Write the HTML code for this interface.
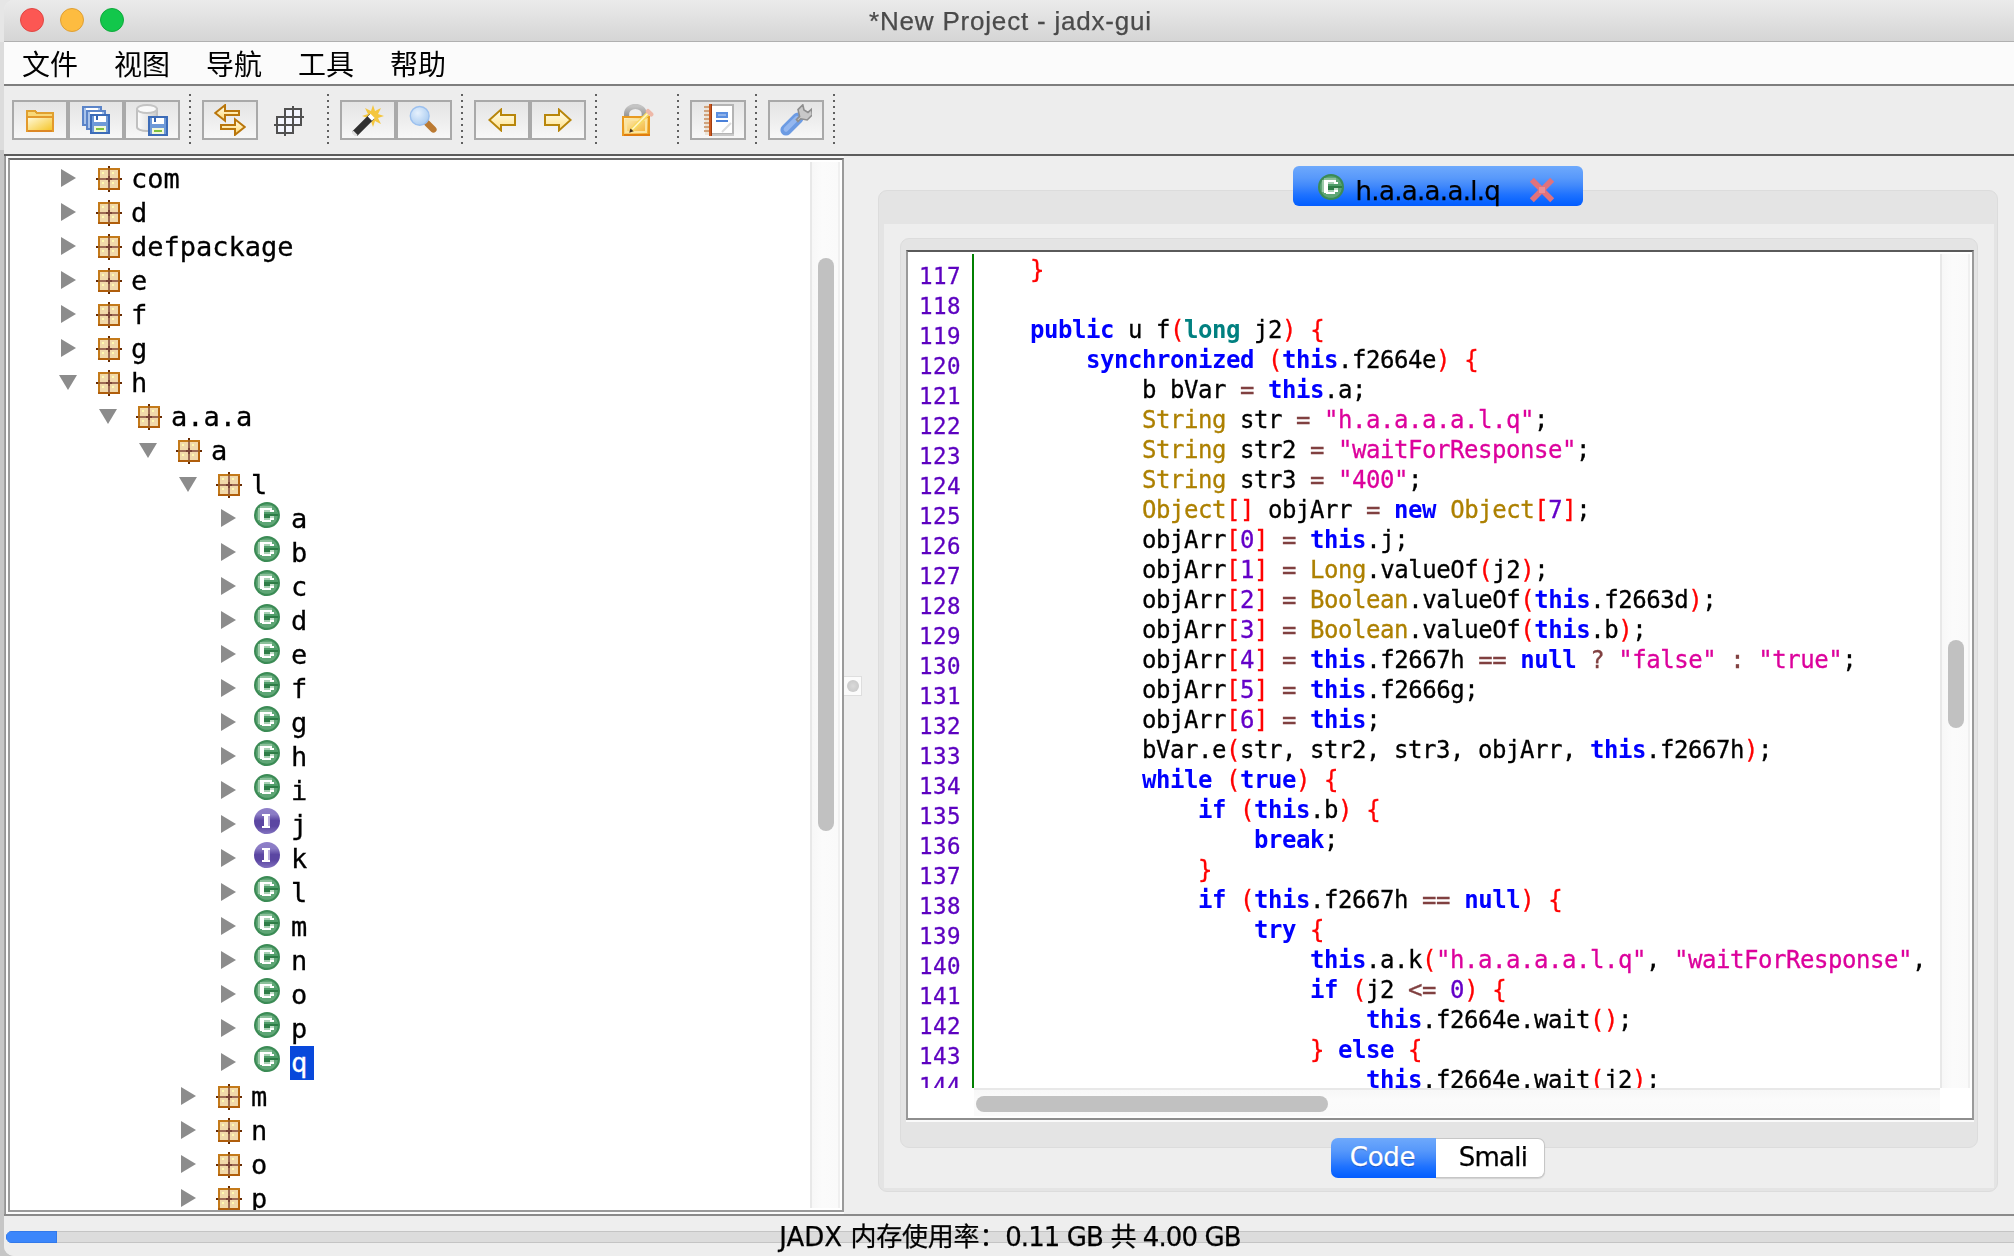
<!DOCTYPE html><html><head><meta charset="utf-8"><title>*New Project - jadx-gui</title><style>
*{box-sizing:border-box;margin:0;padding:0}
html,body{width:2014px;height:1256px;overflow:hidden;background:linear-gradient(#e6e6e6 0 42px,#dcdcdc 42px 150px,#c6c6c6 150px)}
body{position:relative;font-family:"DejaVu Sans","Liberation Sans","Noto Sans CJK SC",sans-serif;}
.abs{position:absolute}
#win{opacity:0.999;position:absolute;left:4px;top:0;width:2010px;height:1256px;background:#eeeeee;border-radius:10px 0 0 10px;overflow:hidden}
#title{position:absolute;left:0;top:0;width:2010px;height:42px;background:linear-gradient(#ebebeb,#d5d5d5);border-bottom:1px solid #b0b0b0}
#title .t{position:absolute;left:0;width:2010px;text-align:center;top:6px;padding-left:3px;font:26px/30px "Liberation Sans",sans-serif;color:#4a4a4a;letter-spacing:0.800px;-webkit-text-stroke:0.250px}
.tl{position:absolute;top:8px;width:24px;height:24px;border-radius:50%}
#menu{position:absolute;left:0;top:42px;width:2010px;height:42px;background:#fbfbfb}
#menu span{position:absolute;top:3px;font:28px/42px "Liberation Sans","Noto Sans CJK SC",sans-serif;color:#000}
#mline{position:absolute;left:0;top:84px;width:2010px;height:2px;background:#7e7e7e}
#tb{position:absolute;left:0;top:86px;width:2010px;height:68px;background:#ededed}
#tline{position:absolute;left:0;top:154px;width:2010px;height:2px;background:#5c5c5c}
.btn{position:absolute;top:14px;height:40px;width:56px;border:2px solid #a9a9a9;background:linear-gradient(#e4e4e4,#f7f7f7)}
.sep{position:absolute;top:8px;width:2px;height:50px;background:repeating-linear-gradient(#606060 0 2px,transparent 2px 6px)}
.ico{position:absolute;width:32px;height:32px}
#tree{position:absolute;left:4px;top:158px;width:836px;height:1054px;background:#fff;border:2px solid #9a9a9a;border-top-color:#6a6a6a;overflow:hidden}
.row{position:absolute;height:34px;font:27px/34px "DejaVu Sans Mono","Liberation Mono",monospace;color:#000;white-space:pre;-webkit-text-stroke:0.300px}
.row .lb{position:absolute;top:0;left:-1px;height:34px;width:24px;padding-left:1px}
.sel{background:#0848db;color:#fff}
.vtrack{position:absolute;background:linear-gradient(90deg,#f7f7f7,#fbfbfb 40%,#fafafa);border-left:2px solid #e8e8e8;border-right:2px solid #f0f0f0}
.thumb{position:absolute;background:#c1c1c1;border-radius:8px}
#code{position:absolute;left:902px;top:250px;width:1068px;height:870px;background:#fff;border:2px solid #9a9a9a;border-top-color:#5a5a5a;border-bottom-color:#8e8e8e;overflow:hidden}
.ln{position:absolute;left:0;width:2000px;height:30px;font:24px/30px "DejaVu Sans Mono","Liberation Mono",monospace;letter-spacing:-0.449px;white-space:pre;color:#000;-webkit-text-stroke:0.300px}
.no{position:absolute;font:22.500px/30px "DejaVu Sans Mono","Liberation Mono",monospace;letter-spacing:0.455px;color:#5c00c0;white-space:pre;-webkit-text-stroke:0.300px}
.k{color:#0000ff;font-weight:bold;-webkit-text-stroke:0}
.t{color:#008080;font-weight:bold;-webkit-text-stroke:0}
.f{color:#ad8000}
.s{color:#dc009c}
.n{color:#6400c8}
.p{color:#ff0000}
.o{color:#804040}
.ui{font-family:"DejaVu Sans","Liberation Sans","Noto Sans CJK SC",sans-serif;font-size:26px;white-space:pre;-webkit-text-stroke:0.250px}
</style></head><body>
<div id="win">
<div id="title"><div class="tl" style="left:16px;background:#fc5753;border:1px solid #df4744"></div><div class="tl" style="left:56px;background:#fdbc40;border:1px solid #de9f34"></div><div class="tl" style="left:96px;background:#12c74b;border:1px solid #10a93c"></div><div class="t">*New Project - jadx-gui</div></div>
<div id="menu">
<span style="left:18px">文件</span>
<span style="left:110px">视图</span>
<span style="left:202px">导航</span>
<span style="left:294px">工具</span>
<span style="left:386px">帮助</span>
</div><div id="mline"></div>
<div id="tb">
<div class="btn" style="left:8px"></div>
<div class="btn" style="left:64px"></div>
<div class="btn" style="left:120px"></div>
<div class="btn" style="left:198px"></div>
<div class="btn" style="left:336px"></div>
<div class="btn" style="left:392px"></div>
<div class="btn" style="left:470px"></div>
<div class="btn" style="left:526px"></div>
<div class="btn" style="left:686px"></div>
<div class="btn" style="left:764px"></div>
<div class="sep" style="left:185px"></div>
<div class="sep" style="left:323px"></div>
<div class="sep" style="left:457px"></div>
<div class="sep" style="left:591px"></div>
<div class="sep" style="left:673px"></div>
<div class="sep" style="left:751px"></div>
<div class="sep" style="left:829px"></div>
<svg class="ico" style="left:20px;top:18px" viewBox="0 0 16 16" shape-rendering="crispEdges"><defs><linearGradient id="gf" x1="0" y1="0" x2="1" y2="1"><stop offset="0" stop-color="#fffbe0"/><stop offset="1" stop-color="#f5c320"/></linearGradient></defs><path d="M1.500 3.500h4l1 1h8v2h-13z" fill="#f8d878" stroke="#e0a030"/><path d="M1.500 6.500h13v7h-13z" fill="url(#gf)" stroke="#e39a2c"/><path d="M2 13.500h12" stroke="#dd8826"/></svg>
<svg class="ico" style="left:78px;top:20px" viewBox="0 0 16 16" shape-rendering="crispEdges"><rect x="0.5" y="0.5" width="9" height="9" fill="#a9c3ea" stroke="#5b84c8"/><rect x="2" y="1" width="6" height="2" fill="#fff"/><rect x="2.5" y="2.5" width="9" height="9" fill="#a9c3ea" stroke="#5b84c8"/><rect x="4" y="3" width="6" height="2" fill="#fff"/><g transform="translate(4,4)"><rect x="0.5" y="0.5" width="9" height="9" fill="#6f9ad8" stroke="#3d6cb8"/><rect x="2" y="1" width="6" height="3" fill="#fff"/><rect x="3" y="1" width="1" height="2" fill="#3563b0"/><rect x="2" y="6" width="6" height="3" fill="#f2f8d8"/><rect x="3" y="7" width="4" height="1" fill="#7ec23c"/></g></svg>
<svg class="ico" style="left:132px;top:18px" viewBox="0 0 16 16"><defs><linearGradient id="gc" x1="0" x2="1"><stop offset="0" stop-color="#fdfdfd"/><stop offset="0.6" stop-color="#e2e2e2"/><stop offset="1" stop-color="#c9c9c9"/></linearGradient></defs><path d="M0.5 2.5v9c0 1.2 2.3 2 5 2s5-.8 5-2v-9z" fill="url(#gc)" stroke="#c0c0c0"/><ellipse cx="5.5" cy="2.5" rx="5" ry="2" fill="#fafafa" stroke="#c4c4c4"/><g shape-rendering="crispEdges"><g transform="translate(6,6)"><rect x="0.5" y="0.5" width="9" height="9" fill="#6f9ad8" stroke="#3d6cb8"/><rect x="2" y="1" width="6" height="3" fill="#fff"/><rect x="3" y="1" width="1" height="2" fill="#3563b0"/><rect x="2" y="6" width="6" height="3" fill="#f2f8d8"/><rect x="3" y="7" width="4" height="1" fill="#7ec23c"/></g></g></svg>
<svg class="ico" style="left:210px;top:18px" viewBox="0 0 16 16"><defs><linearGradient id="ga" x1="0" y1="0" x2="0" y2="1"><stop offset="0" stop-color="#fffdf0"/><stop offset="1" stop-color="#ffd76a"/></linearGradient></defs><path d="M0.6 4.5L5.5 0.6V3.5H12.5V5.5H5.5V8.4z" fill="url(#ga)" stroke="#b9760c" stroke-width="1"/><path d="M15.4 11.5L10.5 7.6V10.5H3.5V12.5H10.5V15.4z" fill="url(#ga)" stroke="#b9760c" stroke-width="1"/></svg>
<svg class="ico" style="left:270px;top:20px" viewBox="0 0 16 16" shape-rendering="crispEdges"><rect x="5" y="1" width="9" height="9" fill="#f3f6fe"/><rect x="1" y="5" width="9" height="9" fill="#f3f6fe"/><g fill="#505050"><rect x="5" y="1" width="1" height="9"/><rect x="9" y="0" width="1" height="10"/><rect x="13" y="1" width="1" height="9"/><rect x="5" y="1" width="9" height="1"/><rect x="5" y="5" width="10" height="1"/><rect x="5" y="9" width="9" height="1"/><rect x="1" y="5" width="1" height="9"/><rect x="5" y="5" width="1" height="10"/><rect x="9" y="5" width="1" height="9"/><rect x="1" y="5" width="9" height="1"/><rect x="0" y="9" width="10" height="1"/><rect x="1" y="13" width="9" height="1"/></g></svg>
<svg class="ico" style="left:348px;top:18px" viewBox="0 0 16 16"><g fill="#f5c22a"><path d="M10.5 0.5l1 3 3-1.5-1.5 3 3 1-3 1 1.5 3-3-1.5-1 3-1-3-3 1.5 1.5-3-3-1 3-1-1.500-3 3 1.5z" opacity="0.9"/></g><path d="M1.400 14.800L10 6.200" stroke="#303030" stroke-width="3.400" stroke-linecap="butt"/><path d="M8.900 7.300L10.300 5.900" stroke="#fff" stroke-width="3"/><path d="M0.800 15.400L1.800 14.400" stroke="#e0e0e0" stroke-width="3"/></svg>
<svg class="ico" style="left:404px;top:18px" viewBox="0 0 16 16"><defs><radialGradient id="gl" cx="0.4" cy="0.35" r="0.7"><stop offset="0" stop-color="#e6f1fd"/><stop offset="1" stop-color="#a9cbf0"/></radialGradient></defs><path d="M9.700 9.700L12.700 12.700" stroke="#bb7a32" stroke-width="3.200" stroke-linecap="round"/><circle cx="5.850" cy="5.950" r="4.700" fill="url(#gl)" stroke="#9cc0ee" stroke-width="0.700"/></svg>
<svg class="ico" style="left:484px;top:22px;width:28px;height:24px" viewBox="0 0 14 12"><defs><linearGradient id="gb" x1="0" y1="0" x2="0" y2="1"><stop offset="0" stop-color="#fffef2"/><stop offset="1" stop-color="#ffe28a"/></linearGradient></defs><path d="M0.7 6L6.5 0.8V3.5H13.5V8.5H6.5V11.2z" fill="url(#gb)" stroke="#b8860b" stroke-width="1"/></svg>
<svg class="ico" style="left:540px;top:22px;width:28px;height:24px" viewBox="0 0 14 12"><path d="M13.3 6L7.5 0.8V3.5H0.5V8.5H7.5V11.2z" fill="url(#gb)" stroke="#b8860b" stroke-width="1"/></svg>
<svg class="ico" style="left:618px;top:18px" viewBox="0 0 16 16"><defs><linearGradient id="gk" x1="0" y1="0" x2="1" y2="1"><stop offset="0" stop-color="#fff3c4"/><stop offset="0.500" stop-color="#f8d070"/><stop offset="1" stop-color="#f0a828"/></linearGradient><linearGradient id="gs" x1="0" y1="0" x2="0" y2="1"><stop offset="0" stop-color="#c4c4c4"/><stop offset="1" stop-color="#8c8c8c"/></linearGradient></defs><path d="M2.300 7V4.800a4.400 3.600 0 0 1 8.800 0V7" fill="none" stroke="url(#gs)" stroke-width="2.600"/><rect x="0.500" y="6.500" width="13" height="9" fill="url(#gk)" stroke="#e89a20"/><path d="M1 15.500h13" stroke="#e07c10" stroke-width="1"/><rect x="2" y="8" width="10" height="6" fill="none" stroke="#fbe4a0" stroke-width="1"/><path d="M4.800 13.200l8.600-8.800" stroke="#f6d860" stroke-width="2.200"/><path d="M5.200 12.600l8-8.200" stroke="#fff6c8" stroke-width="0.800"/><path d="M3.600 14.400l0.600-2.200 1.600 1.400z" fill="#4a3420"/><path d="M13 3.600l1.600 1.600" stroke="#eeb8a8" stroke-width="2.200" stroke-linecap="round"/></svg>
<svg class="ico" style="left:700px;top:18px" viewBox="0 0 16 16" shape-rendering="crispEdges"><rect x="3.500" y="0.500" width="11" height="14.500" fill="#fff" stroke="#b4b4b4"/><rect x="4" y="15" width="11" height="1" fill="#c9c9c9"/><rect x="0.500" y="0.500" width="2.500" height="15" fill="#ece3d6"/><g fill="#cfa27c"><rect x="0" y="1" width="2.500" height="1"/><rect x="0" y="3" width="2.500" height="1"/><rect x="0" y="5" width="2.500" height="1"/><rect x="0" y="7" width="2.500" height="1"/><rect x="0" y="9" width="2.500" height="1"/><rect x="0" y="11" width="2.500" height="1"/><rect x="0" y="13" width="2.500" height="1"/></g><rect x="2.400" y="0" width="1.600" height="16" fill="#cc5a20"/><rect x="3.400" y="0" width="0.600" height="16" fill="#a03c10"/><rect x="6" y="4" width="6" height="3" fill="#5b8fe0"/><rect x="7" y="5" width="4" height="1" fill="#8fb2ea"/><rect x="6" y="8" width="6" height="1" fill="#4a80d8"/><path d="M9 14l4.500-4.500" stroke="#dcdcdc" stroke-width="1" shape-rendering="auto"/></svg>
<svg class="ico" style="left:776px;top:18px" viewBox="0 0 16 16"><path d="M3 13L9 7" stroke="#6c9be3" stroke-width="5.600" stroke-linecap="round"/><path d="M3 12.600L8.400 7.200" stroke="#94b7ef" stroke-width="2.400" stroke-linecap="round"/><path d="M8.200 7.800l1.600-1.600-0.800-3.400 2.400-2.400 0.600 2.600 2 1.200 1.800-1.600 0.400 2.800-2.600 2.600-3.200-0.600-1.400 1.400z" fill="#c8c8c8" stroke="#8e8e8e" stroke-width="0.800"/></svg>
</div><div id="tline"></div>
<div class="abs" style="left:0;top:156px;width:2px;height:1058px;background:linear-gradient(90deg,#a6a6a6,#8c8c8c)"></div><div class="abs" style="left:2px;top:156px;width:2px;height:1058px;background:#fcfcfc"></div><div class="abs" style="left:2px;top:156px;width:838px;height:2px;background:#f9f9f9"></div><div class="abs" style="left:2px;top:1212px;width:838px;height:2px;background:#fbfbfb"></div>
<div id="tree">
<svg class="abs" style="left:51px;top:9px;width:15px;height:18px" viewBox="0 0 15 18"><path d="M0 0V18L15 9z" fill="#8c8c8c"/></svg>
<svg class="ico" style="left:84px;top:4px" viewBox="0 0 16 16" shape-rendering="crispEdges"><rect x="2" y="2" width="11" height="11" fill="#c47a1a"/><rect x="12" y="3" width="1" height="10" fill="#b4640f"/><rect x="2" y="12" width="11" height="1" fill="#b05e0c"/><rect x="3" y="3" width="9" height="9" fill="#f1d9ab"/><path d="M3 7.500h9M7.500 3v9" stroke="#9c6a55" fill="none"/><path d="M2 7.500h1M12 7.500h1M7.500 2v1M7.500 12v1" stroke="#a0621e"/><path d="M1 7.500h1M13 7.500h1M7.500 1v1M7.500 13v1" stroke="#6b2c00"/><path d="M6 7.500h3M7.500 6v3" stroke="#7a4438"/><g fill="#fffbb0"><rect x="4" y="4" width="1" height="1"/><rect x="9" y="4" width="1" height="1"/><rect x="4" y="9" width="1" height="1"/><rect x="9" y="9" width="1" height="1"/></g></svg>
<div class="row" style="left:121px;top:2px"><span class="lb">com</span></div>
<svg class="abs" style="left:51px;top:43px;width:15px;height:18px" viewBox="0 0 15 18"><path d="M0 0V18L15 9z" fill="#8c8c8c"/></svg>
<svg class="ico" style="left:84px;top:38px" viewBox="0 0 16 16" shape-rendering="crispEdges"><rect x="2" y="2" width="11" height="11" fill="#c47a1a"/><rect x="12" y="3" width="1" height="10" fill="#b4640f"/><rect x="2" y="12" width="11" height="1" fill="#b05e0c"/><rect x="3" y="3" width="9" height="9" fill="#f1d9ab"/><path d="M3 7.500h9M7.500 3v9" stroke="#9c6a55" fill="none"/><path d="M2 7.500h1M12 7.500h1M7.500 2v1M7.500 12v1" stroke="#a0621e"/><path d="M1 7.500h1M13 7.500h1M7.500 1v1M7.500 13v1" stroke="#6b2c00"/><path d="M6 7.500h3M7.500 6v3" stroke="#7a4438"/><g fill="#fffbb0"><rect x="4" y="4" width="1" height="1"/><rect x="9" y="4" width="1" height="1"/><rect x="4" y="9" width="1" height="1"/><rect x="9" y="9" width="1" height="1"/></g></svg>
<div class="row" style="left:121px;top:36px"><span class="lb">d</span></div>
<svg class="abs" style="left:51px;top:77px;width:15px;height:18px" viewBox="0 0 15 18"><path d="M0 0V18L15 9z" fill="#8c8c8c"/></svg>
<svg class="ico" style="left:84px;top:72px" viewBox="0 0 16 16" shape-rendering="crispEdges"><rect x="2" y="2" width="11" height="11" fill="#c47a1a"/><rect x="12" y="3" width="1" height="10" fill="#b4640f"/><rect x="2" y="12" width="11" height="1" fill="#b05e0c"/><rect x="3" y="3" width="9" height="9" fill="#f1d9ab"/><path d="M3 7.500h9M7.500 3v9" stroke="#9c6a55" fill="none"/><path d="M2 7.500h1M12 7.500h1M7.500 2v1M7.500 12v1" stroke="#a0621e"/><path d="M1 7.500h1M13 7.500h1M7.500 1v1M7.500 13v1" stroke="#6b2c00"/><path d="M6 7.500h3M7.500 6v3" stroke="#7a4438"/><g fill="#fffbb0"><rect x="4" y="4" width="1" height="1"/><rect x="9" y="4" width="1" height="1"/><rect x="4" y="9" width="1" height="1"/><rect x="9" y="9" width="1" height="1"/></g></svg>
<div class="row" style="left:121px;top:70px"><span class="lb">defpackage</span></div>
<svg class="abs" style="left:51px;top:111px;width:15px;height:18px" viewBox="0 0 15 18"><path d="M0 0V18L15 9z" fill="#8c8c8c"/></svg>
<svg class="ico" style="left:84px;top:106px" viewBox="0 0 16 16" shape-rendering="crispEdges"><rect x="2" y="2" width="11" height="11" fill="#c47a1a"/><rect x="12" y="3" width="1" height="10" fill="#b4640f"/><rect x="2" y="12" width="11" height="1" fill="#b05e0c"/><rect x="3" y="3" width="9" height="9" fill="#f1d9ab"/><path d="M3 7.500h9M7.500 3v9" stroke="#9c6a55" fill="none"/><path d="M2 7.500h1M12 7.500h1M7.500 2v1M7.500 12v1" stroke="#a0621e"/><path d="M1 7.500h1M13 7.500h1M7.500 1v1M7.500 13v1" stroke="#6b2c00"/><path d="M6 7.500h3M7.500 6v3" stroke="#7a4438"/><g fill="#fffbb0"><rect x="4" y="4" width="1" height="1"/><rect x="9" y="4" width="1" height="1"/><rect x="4" y="9" width="1" height="1"/><rect x="9" y="9" width="1" height="1"/></g></svg>
<div class="row" style="left:121px;top:104px"><span class="lb">e</span></div>
<svg class="abs" style="left:51px;top:145px;width:15px;height:18px" viewBox="0 0 15 18"><path d="M0 0V18L15 9z" fill="#8c8c8c"/></svg>
<svg class="ico" style="left:84px;top:140px" viewBox="0 0 16 16" shape-rendering="crispEdges"><rect x="2" y="2" width="11" height="11" fill="#c47a1a"/><rect x="12" y="3" width="1" height="10" fill="#b4640f"/><rect x="2" y="12" width="11" height="1" fill="#b05e0c"/><rect x="3" y="3" width="9" height="9" fill="#f1d9ab"/><path d="M3 7.500h9M7.500 3v9" stroke="#9c6a55" fill="none"/><path d="M2 7.500h1M12 7.500h1M7.500 2v1M7.500 12v1" stroke="#a0621e"/><path d="M1 7.500h1M13 7.500h1M7.500 1v1M7.500 13v1" stroke="#6b2c00"/><path d="M6 7.500h3M7.500 6v3" stroke="#7a4438"/><g fill="#fffbb0"><rect x="4" y="4" width="1" height="1"/><rect x="9" y="4" width="1" height="1"/><rect x="4" y="9" width="1" height="1"/><rect x="9" y="9" width="1" height="1"/></g></svg>
<div class="row" style="left:121px;top:138px"><span class="lb">f</span></div>
<svg class="abs" style="left:51px;top:179px;width:15px;height:18px" viewBox="0 0 15 18"><path d="M0 0V18L15 9z" fill="#8c8c8c"/></svg>
<svg class="ico" style="left:84px;top:174px" viewBox="0 0 16 16" shape-rendering="crispEdges"><rect x="2" y="2" width="11" height="11" fill="#c47a1a"/><rect x="12" y="3" width="1" height="10" fill="#b4640f"/><rect x="2" y="12" width="11" height="1" fill="#b05e0c"/><rect x="3" y="3" width="9" height="9" fill="#f1d9ab"/><path d="M3 7.500h9M7.500 3v9" stroke="#9c6a55" fill="none"/><path d="M2 7.500h1M12 7.500h1M7.500 2v1M7.500 12v1" stroke="#a0621e"/><path d="M1 7.500h1M13 7.500h1M7.500 1v1M7.500 13v1" stroke="#6b2c00"/><path d="M6 7.500h3M7.500 6v3" stroke="#7a4438"/><g fill="#fffbb0"><rect x="4" y="4" width="1" height="1"/><rect x="9" y="4" width="1" height="1"/><rect x="4" y="9" width="1" height="1"/><rect x="9" y="9" width="1" height="1"/></g></svg>
<div class="row" style="left:121px;top:172px"><span class="lb">g</span></div>
<svg class="abs" style="left:49px;top:215px;width:18px;height:15px" viewBox="0 0 18 15"><path d="M0 0H18L9 15z" fill="#8c8c8c"/></svg>
<svg class="ico" style="left:84px;top:208px" viewBox="0 0 16 16" shape-rendering="crispEdges"><rect x="2" y="2" width="11" height="11" fill="#c47a1a"/><rect x="12" y="3" width="1" height="10" fill="#b4640f"/><rect x="2" y="12" width="11" height="1" fill="#b05e0c"/><rect x="3" y="3" width="9" height="9" fill="#f1d9ab"/><path d="M3 7.500h9M7.500 3v9" stroke="#9c6a55" fill="none"/><path d="M2 7.500h1M12 7.500h1M7.500 2v1M7.500 12v1" stroke="#a0621e"/><path d="M1 7.500h1M13 7.500h1M7.500 1v1M7.500 13v1" stroke="#6b2c00"/><path d="M6 7.500h3M7.500 6v3" stroke="#7a4438"/><g fill="#fffbb0"><rect x="4" y="4" width="1" height="1"/><rect x="9" y="4" width="1" height="1"/><rect x="4" y="9" width="1" height="1"/><rect x="9" y="9" width="1" height="1"/></g></svg>
<div class="row" style="left:121px;top:206px"><span class="lb">h</span></div>
<svg class="abs" style="left:89px;top:249px;width:18px;height:15px" viewBox="0 0 18 15"><path d="M0 0H18L9 15z" fill="#8c8c8c"/></svg>
<svg class="ico" style="left:124px;top:242px" viewBox="0 0 16 16" shape-rendering="crispEdges"><rect x="2" y="2" width="11" height="11" fill="#c47a1a"/><rect x="12" y="3" width="1" height="10" fill="#b4640f"/><rect x="2" y="12" width="11" height="1" fill="#b05e0c"/><rect x="3" y="3" width="9" height="9" fill="#f1d9ab"/><path d="M3 7.500h9M7.500 3v9" stroke="#9c6a55" fill="none"/><path d="M2 7.500h1M12 7.500h1M7.500 2v1M7.500 12v1" stroke="#a0621e"/><path d="M1 7.500h1M13 7.500h1M7.500 1v1M7.500 13v1" stroke="#6b2c00"/><path d="M6 7.500h3M7.500 6v3" stroke="#7a4438"/><g fill="#fffbb0"><rect x="4" y="4" width="1" height="1"/><rect x="9" y="4" width="1" height="1"/><rect x="4" y="9" width="1" height="1"/><rect x="9" y="9" width="1" height="1"/></g></svg>
<div class="row" style="left:161px;top:240px"><span class="lb">a.a.a</span></div>
<svg class="abs" style="left:129px;top:283px;width:18px;height:15px" viewBox="0 0 18 15"><path d="M0 0H18L9 15z" fill="#8c8c8c"/></svg>
<svg class="ico" style="left:164px;top:276px" viewBox="0 0 16 16" shape-rendering="crispEdges"><rect x="2" y="2" width="11" height="11" fill="#c47a1a"/><rect x="12" y="3" width="1" height="10" fill="#b4640f"/><rect x="2" y="12" width="11" height="1" fill="#b05e0c"/><rect x="3" y="3" width="9" height="9" fill="#f1d9ab"/><path d="M3 7.500h9M7.500 3v9" stroke="#9c6a55" fill="none"/><path d="M2 7.500h1M12 7.500h1M7.500 2v1M7.500 12v1" stroke="#a0621e"/><path d="M1 7.500h1M13 7.500h1M7.500 1v1M7.500 13v1" stroke="#6b2c00"/><path d="M6 7.500h3M7.500 6v3" stroke="#7a4438"/><g fill="#fffbb0"><rect x="4" y="4" width="1" height="1"/><rect x="9" y="4" width="1" height="1"/><rect x="4" y="9" width="1" height="1"/><rect x="9" y="9" width="1" height="1"/></g></svg>
<div class="row" style="left:201px;top:274px"><span class="lb">a</span></div>
<svg class="abs" style="left:169px;top:317px;width:18px;height:15px" viewBox="0 0 18 15"><path d="M0 0H18L9 15z" fill="#8c8c8c"/></svg>
<svg class="ico" style="left:204px;top:310px" viewBox="0 0 16 16" shape-rendering="crispEdges"><rect x="2" y="2" width="11" height="11" fill="#c47a1a"/><rect x="12" y="3" width="1" height="10" fill="#b4640f"/><rect x="2" y="12" width="11" height="1" fill="#b05e0c"/><rect x="3" y="3" width="9" height="9" fill="#f1d9ab"/><path d="M3 7.500h9M7.500 3v9" stroke="#9c6a55" fill="none"/><path d="M2 7.500h1M12 7.500h1M7.500 2v1M7.500 12v1" stroke="#a0621e"/><path d="M1 7.500h1M13 7.500h1M7.500 1v1M7.500 13v1" stroke="#6b2c00"/><path d="M6 7.500h3M7.500 6v3" stroke="#7a4438"/><g fill="#fffbb0"><rect x="4" y="4" width="1" height="1"/><rect x="9" y="4" width="1" height="1"/><rect x="4" y="9" width="1" height="1"/><rect x="9" y="9" width="1" height="1"/></g></svg>
<div class="row" style="left:241px;top:308px"><span class="lb">l</span></div>
<svg class="abs" style="left:211px;top:349px;width:15px;height:18px" viewBox="0 0 15 18"><path d="M0 0V18L15 9z" fill="#8c8c8c"/></svg>
<svg class="ico" style="left:244px;top:342px" viewBox="0 0 16 16"><circle cx="6.500" cy="6.500" r="6.500" fill="#3b8b55"/><circle cx="6.500" cy="6.500" r="5.400" fill="#5fa676"/><g shape-rendering="crispEdges"><rect x="3" y="2" width="6" height="1" fill="#8cc09b"/><rect x="2" y="3" width="1" height="6" fill="#9ccaa8"/><rect x="5" y="4" width="3" height="5" fill="#a9d1b4"/><rect x="8" y="7" width="2" height="1" fill="#c4dfcb"/><rect x="5" y="5" width="7" height="1" fill="#4f9d69"/><rect x="5" y="6" width="7" height="1" fill="#2e7d47"/><rect x="5" y="7" width="3" height="1" fill="#2e7d47"/><g fill="#fff"><rect x="3" y="3" width="6" height="1"/><rect x="8" y="4" width="2" height="1"/><rect x="3" y="3" width="2" height="6.500"/><rect x="4" y="9" width="4.500" height="1"/><rect x="8" y="8" width="2" height="1"/></g></g></svg>
<div class="row" style="left:281px;top:342px"><span class="lb">a</span></div>
<svg class="abs" style="left:211px;top:383px;width:15px;height:18px" viewBox="0 0 15 18"><path d="M0 0V18L15 9z" fill="#8c8c8c"/></svg>
<svg class="ico" style="left:244px;top:376px" viewBox="0 0 16 16"><circle cx="6.500" cy="6.500" r="6.500" fill="#3b8b55"/><circle cx="6.500" cy="6.500" r="5.400" fill="#5fa676"/><g shape-rendering="crispEdges"><rect x="3" y="2" width="6" height="1" fill="#8cc09b"/><rect x="2" y="3" width="1" height="6" fill="#9ccaa8"/><rect x="5" y="4" width="3" height="5" fill="#a9d1b4"/><rect x="8" y="7" width="2" height="1" fill="#c4dfcb"/><rect x="5" y="5" width="7" height="1" fill="#4f9d69"/><rect x="5" y="6" width="7" height="1" fill="#2e7d47"/><rect x="5" y="7" width="3" height="1" fill="#2e7d47"/><g fill="#fff"><rect x="3" y="3" width="6" height="1"/><rect x="8" y="4" width="2" height="1"/><rect x="3" y="3" width="2" height="6.500"/><rect x="4" y="9" width="4.500" height="1"/><rect x="8" y="8" width="2" height="1"/></g></g></svg>
<div class="row" style="left:281px;top:376px"><span class="lb">b</span></div>
<svg class="abs" style="left:211px;top:417px;width:15px;height:18px" viewBox="0 0 15 18"><path d="M0 0V18L15 9z" fill="#8c8c8c"/></svg>
<svg class="ico" style="left:244px;top:410px" viewBox="0 0 16 16"><circle cx="6.500" cy="6.500" r="6.500" fill="#3b8b55"/><circle cx="6.500" cy="6.500" r="5.400" fill="#5fa676"/><g shape-rendering="crispEdges"><rect x="3" y="2" width="6" height="1" fill="#8cc09b"/><rect x="2" y="3" width="1" height="6" fill="#9ccaa8"/><rect x="5" y="4" width="3" height="5" fill="#a9d1b4"/><rect x="8" y="7" width="2" height="1" fill="#c4dfcb"/><rect x="5" y="5" width="7" height="1" fill="#4f9d69"/><rect x="5" y="6" width="7" height="1" fill="#2e7d47"/><rect x="5" y="7" width="3" height="1" fill="#2e7d47"/><g fill="#fff"><rect x="3" y="3" width="6" height="1"/><rect x="8" y="4" width="2" height="1"/><rect x="3" y="3" width="2" height="6.500"/><rect x="4" y="9" width="4.500" height="1"/><rect x="8" y="8" width="2" height="1"/></g></g></svg>
<div class="row" style="left:281px;top:410px"><span class="lb">c</span></div>
<svg class="abs" style="left:211px;top:451px;width:15px;height:18px" viewBox="0 0 15 18"><path d="M0 0V18L15 9z" fill="#8c8c8c"/></svg>
<svg class="ico" style="left:244px;top:444px" viewBox="0 0 16 16"><circle cx="6.500" cy="6.500" r="6.500" fill="#3b8b55"/><circle cx="6.500" cy="6.500" r="5.400" fill="#5fa676"/><g shape-rendering="crispEdges"><rect x="3" y="2" width="6" height="1" fill="#8cc09b"/><rect x="2" y="3" width="1" height="6" fill="#9ccaa8"/><rect x="5" y="4" width="3" height="5" fill="#a9d1b4"/><rect x="8" y="7" width="2" height="1" fill="#c4dfcb"/><rect x="5" y="5" width="7" height="1" fill="#4f9d69"/><rect x="5" y="6" width="7" height="1" fill="#2e7d47"/><rect x="5" y="7" width="3" height="1" fill="#2e7d47"/><g fill="#fff"><rect x="3" y="3" width="6" height="1"/><rect x="8" y="4" width="2" height="1"/><rect x="3" y="3" width="2" height="6.500"/><rect x="4" y="9" width="4.500" height="1"/><rect x="8" y="8" width="2" height="1"/></g></g></svg>
<div class="row" style="left:281px;top:444px"><span class="lb">d</span></div>
<svg class="abs" style="left:211px;top:485px;width:15px;height:18px" viewBox="0 0 15 18"><path d="M0 0V18L15 9z" fill="#8c8c8c"/></svg>
<svg class="ico" style="left:244px;top:478px" viewBox="0 0 16 16"><circle cx="6.500" cy="6.500" r="6.500" fill="#3b8b55"/><circle cx="6.500" cy="6.500" r="5.400" fill="#5fa676"/><g shape-rendering="crispEdges"><rect x="3" y="2" width="6" height="1" fill="#8cc09b"/><rect x="2" y="3" width="1" height="6" fill="#9ccaa8"/><rect x="5" y="4" width="3" height="5" fill="#a9d1b4"/><rect x="8" y="7" width="2" height="1" fill="#c4dfcb"/><rect x="5" y="5" width="7" height="1" fill="#4f9d69"/><rect x="5" y="6" width="7" height="1" fill="#2e7d47"/><rect x="5" y="7" width="3" height="1" fill="#2e7d47"/><g fill="#fff"><rect x="3" y="3" width="6" height="1"/><rect x="8" y="4" width="2" height="1"/><rect x="3" y="3" width="2" height="6.500"/><rect x="4" y="9" width="4.500" height="1"/><rect x="8" y="8" width="2" height="1"/></g></g></svg>
<div class="row" style="left:281px;top:478px"><span class="lb">e</span></div>
<svg class="abs" style="left:211px;top:519px;width:15px;height:18px" viewBox="0 0 15 18"><path d="M0 0V18L15 9z" fill="#8c8c8c"/></svg>
<svg class="ico" style="left:244px;top:512px" viewBox="0 0 16 16"><circle cx="6.500" cy="6.500" r="6.500" fill="#3b8b55"/><circle cx="6.500" cy="6.500" r="5.400" fill="#5fa676"/><g shape-rendering="crispEdges"><rect x="3" y="2" width="6" height="1" fill="#8cc09b"/><rect x="2" y="3" width="1" height="6" fill="#9ccaa8"/><rect x="5" y="4" width="3" height="5" fill="#a9d1b4"/><rect x="8" y="7" width="2" height="1" fill="#c4dfcb"/><rect x="5" y="5" width="7" height="1" fill="#4f9d69"/><rect x="5" y="6" width="7" height="1" fill="#2e7d47"/><rect x="5" y="7" width="3" height="1" fill="#2e7d47"/><g fill="#fff"><rect x="3" y="3" width="6" height="1"/><rect x="8" y="4" width="2" height="1"/><rect x="3" y="3" width="2" height="6.500"/><rect x="4" y="9" width="4.500" height="1"/><rect x="8" y="8" width="2" height="1"/></g></g></svg>
<div class="row" style="left:281px;top:512px"><span class="lb">f</span></div>
<svg class="abs" style="left:211px;top:553px;width:15px;height:18px" viewBox="0 0 15 18"><path d="M0 0V18L15 9z" fill="#8c8c8c"/></svg>
<svg class="ico" style="left:244px;top:546px" viewBox="0 0 16 16"><circle cx="6.500" cy="6.500" r="6.500" fill="#3b8b55"/><circle cx="6.500" cy="6.500" r="5.400" fill="#5fa676"/><g shape-rendering="crispEdges"><rect x="3" y="2" width="6" height="1" fill="#8cc09b"/><rect x="2" y="3" width="1" height="6" fill="#9ccaa8"/><rect x="5" y="4" width="3" height="5" fill="#a9d1b4"/><rect x="8" y="7" width="2" height="1" fill="#c4dfcb"/><rect x="5" y="5" width="7" height="1" fill="#4f9d69"/><rect x="5" y="6" width="7" height="1" fill="#2e7d47"/><rect x="5" y="7" width="3" height="1" fill="#2e7d47"/><g fill="#fff"><rect x="3" y="3" width="6" height="1"/><rect x="8" y="4" width="2" height="1"/><rect x="3" y="3" width="2" height="6.500"/><rect x="4" y="9" width="4.500" height="1"/><rect x="8" y="8" width="2" height="1"/></g></g></svg>
<div class="row" style="left:281px;top:546px"><span class="lb">g</span></div>
<svg class="abs" style="left:211px;top:587px;width:15px;height:18px" viewBox="0 0 15 18"><path d="M0 0V18L15 9z" fill="#8c8c8c"/></svg>
<svg class="ico" style="left:244px;top:580px" viewBox="0 0 16 16"><circle cx="6.500" cy="6.500" r="6.500" fill="#3b8b55"/><circle cx="6.500" cy="6.500" r="5.400" fill="#5fa676"/><g shape-rendering="crispEdges"><rect x="3" y="2" width="6" height="1" fill="#8cc09b"/><rect x="2" y="3" width="1" height="6" fill="#9ccaa8"/><rect x="5" y="4" width="3" height="5" fill="#a9d1b4"/><rect x="8" y="7" width="2" height="1" fill="#c4dfcb"/><rect x="5" y="5" width="7" height="1" fill="#4f9d69"/><rect x="5" y="6" width="7" height="1" fill="#2e7d47"/><rect x="5" y="7" width="3" height="1" fill="#2e7d47"/><g fill="#fff"><rect x="3" y="3" width="6" height="1"/><rect x="8" y="4" width="2" height="1"/><rect x="3" y="3" width="2" height="6.500"/><rect x="4" y="9" width="4.500" height="1"/><rect x="8" y="8" width="2" height="1"/></g></g></svg>
<div class="row" style="left:281px;top:580px"><span class="lb">h</span></div>
<svg class="abs" style="left:211px;top:621px;width:15px;height:18px" viewBox="0 0 15 18"><path d="M0 0V18L15 9z" fill="#8c8c8c"/></svg>
<svg class="ico" style="left:244px;top:614px" viewBox="0 0 16 16"><circle cx="6.500" cy="6.500" r="6.500" fill="#3b8b55"/><circle cx="6.500" cy="6.500" r="5.400" fill="#5fa676"/><g shape-rendering="crispEdges"><rect x="3" y="2" width="6" height="1" fill="#8cc09b"/><rect x="2" y="3" width="1" height="6" fill="#9ccaa8"/><rect x="5" y="4" width="3" height="5" fill="#a9d1b4"/><rect x="8" y="7" width="2" height="1" fill="#c4dfcb"/><rect x="5" y="5" width="7" height="1" fill="#4f9d69"/><rect x="5" y="6" width="7" height="1" fill="#2e7d47"/><rect x="5" y="7" width="3" height="1" fill="#2e7d47"/><g fill="#fff"><rect x="3" y="3" width="6" height="1"/><rect x="8" y="4" width="2" height="1"/><rect x="3" y="3" width="2" height="6.500"/><rect x="4" y="9" width="4.500" height="1"/><rect x="8" y="8" width="2" height="1"/></g></g></svg>
<div class="row" style="left:281px;top:614px"><span class="lb">i</span></div>
<svg class="abs" style="left:211px;top:655px;width:15px;height:18px" viewBox="0 0 15 18"><path d="M0 0V18L15 9z" fill="#8c8c8c"/></svg>
<svg class="ico" style="left:244px;top:648px" viewBox="0 0 16 16"><defs><linearGradient id="gi" x1="0" y1="0" x2="0" y2="1"><stop offset="0" stop-color="#8f80c9"/><stop offset="0.250" stop-color="#8a7bc4"/><stop offset="0.480" stop-color="#5b46a2"/><stop offset="0.700" stop-color="#5b46a2"/><stop offset="1" stop-color="#8373c0"/></linearGradient></defs><circle cx="6.500" cy="6.500" r="6.500" fill="url(#gi)"/><g shape-rendering="crispEdges"><rect x="4" y="3" width="4" height="1" fill="#fff"/><rect x="4" y="9" width="4" height="1" fill="#fff"/><rect x="5" y="3" width="2" height="7" fill="#fff"/><rect x="7" y="4" width="1" height="5" fill="#b9aedd"/></g></svg>
<div class="row" style="left:281px;top:648px"><span class="lb">j</span></div>
<svg class="abs" style="left:211px;top:689px;width:15px;height:18px" viewBox="0 0 15 18"><path d="M0 0V18L15 9z" fill="#8c8c8c"/></svg>
<svg class="ico" style="left:244px;top:682px" viewBox="0 0 16 16"><defs><linearGradient id="gi" x1="0" y1="0" x2="0" y2="1"><stop offset="0" stop-color="#8f80c9"/><stop offset="0.250" stop-color="#8a7bc4"/><stop offset="0.480" stop-color="#5b46a2"/><stop offset="0.700" stop-color="#5b46a2"/><stop offset="1" stop-color="#8373c0"/></linearGradient></defs><circle cx="6.500" cy="6.500" r="6.500" fill="url(#gi)"/><g shape-rendering="crispEdges"><rect x="4" y="3" width="4" height="1" fill="#fff"/><rect x="4" y="9" width="4" height="1" fill="#fff"/><rect x="5" y="3" width="2" height="7" fill="#fff"/><rect x="7" y="4" width="1" height="5" fill="#b9aedd"/></g></svg>
<div class="row" style="left:281px;top:682px"><span class="lb">k</span></div>
<svg class="abs" style="left:211px;top:723px;width:15px;height:18px" viewBox="0 0 15 18"><path d="M0 0V18L15 9z" fill="#8c8c8c"/></svg>
<svg class="ico" style="left:244px;top:716px" viewBox="0 0 16 16"><circle cx="6.500" cy="6.500" r="6.500" fill="#3b8b55"/><circle cx="6.500" cy="6.500" r="5.400" fill="#5fa676"/><g shape-rendering="crispEdges"><rect x="3" y="2" width="6" height="1" fill="#8cc09b"/><rect x="2" y="3" width="1" height="6" fill="#9ccaa8"/><rect x="5" y="4" width="3" height="5" fill="#a9d1b4"/><rect x="8" y="7" width="2" height="1" fill="#c4dfcb"/><rect x="5" y="5" width="7" height="1" fill="#4f9d69"/><rect x="5" y="6" width="7" height="1" fill="#2e7d47"/><rect x="5" y="7" width="3" height="1" fill="#2e7d47"/><g fill="#fff"><rect x="3" y="3" width="6" height="1"/><rect x="8" y="4" width="2" height="1"/><rect x="3" y="3" width="2" height="6.500"/><rect x="4" y="9" width="4.500" height="1"/><rect x="8" y="8" width="2" height="1"/></g></g></svg>
<div class="row" style="left:281px;top:716px"><span class="lb">l</span></div>
<svg class="abs" style="left:211px;top:757px;width:15px;height:18px" viewBox="0 0 15 18"><path d="M0 0V18L15 9z" fill="#8c8c8c"/></svg>
<svg class="ico" style="left:244px;top:750px" viewBox="0 0 16 16"><circle cx="6.500" cy="6.500" r="6.500" fill="#3b8b55"/><circle cx="6.500" cy="6.500" r="5.400" fill="#5fa676"/><g shape-rendering="crispEdges"><rect x="3" y="2" width="6" height="1" fill="#8cc09b"/><rect x="2" y="3" width="1" height="6" fill="#9ccaa8"/><rect x="5" y="4" width="3" height="5" fill="#a9d1b4"/><rect x="8" y="7" width="2" height="1" fill="#c4dfcb"/><rect x="5" y="5" width="7" height="1" fill="#4f9d69"/><rect x="5" y="6" width="7" height="1" fill="#2e7d47"/><rect x="5" y="7" width="3" height="1" fill="#2e7d47"/><g fill="#fff"><rect x="3" y="3" width="6" height="1"/><rect x="8" y="4" width="2" height="1"/><rect x="3" y="3" width="2" height="6.500"/><rect x="4" y="9" width="4.500" height="1"/><rect x="8" y="8" width="2" height="1"/></g></g></svg>
<div class="row" style="left:281px;top:750px"><span class="lb">m</span></div>
<svg class="abs" style="left:211px;top:791px;width:15px;height:18px" viewBox="0 0 15 18"><path d="M0 0V18L15 9z" fill="#8c8c8c"/></svg>
<svg class="ico" style="left:244px;top:784px" viewBox="0 0 16 16"><circle cx="6.500" cy="6.500" r="6.500" fill="#3b8b55"/><circle cx="6.500" cy="6.500" r="5.400" fill="#5fa676"/><g shape-rendering="crispEdges"><rect x="3" y="2" width="6" height="1" fill="#8cc09b"/><rect x="2" y="3" width="1" height="6" fill="#9ccaa8"/><rect x="5" y="4" width="3" height="5" fill="#a9d1b4"/><rect x="8" y="7" width="2" height="1" fill="#c4dfcb"/><rect x="5" y="5" width="7" height="1" fill="#4f9d69"/><rect x="5" y="6" width="7" height="1" fill="#2e7d47"/><rect x="5" y="7" width="3" height="1" fill="#2e7d47"/><g fill="#fff"><rect x="3" y="3" width="6" height="1"/><rect x="8" y="4" width="2" height="1"/><rect x="3" y="3" width="2" height="6.500"/><rect x="4" y="9" width="4.500" height="1"/><rect x="8" y="8" width="2" height="1"/></g></g></svg>
<div class="row" style="left:281px;top:784px"><span class="lb">n</span></div>
<svg class="abs" style="left:211px;top:825px;width:15px;height:18px" viewBox="0 0 15 18"><path d="M0 0V18L15 9z" fill="#8c8c8c"/></svg>
<svg class="ico" style="left:244px;top:818px" viewBox="0 0 16 16"><circle cx="6.500" cy="6.500" r="6.500" fill="#3b8b55"/><circle cx="6.500" cy="6.500" r="5.400" fill="#5fa676"/><g shape-rendering="crispEdges"><rect x="3" y="2" width="6" height="1" fill="#8cc09b"/><rect x="2" y="3" width="1" height="6" fill="#9ccaa8"/><rect x="5" y="4" width="3" height="5" fill="#a9d1b4"/><rect x="8" y="7" width="2" height="1" fill="#c4dfcb"/><rect x="5" y="5" width="7" height="1" fill="#4f9d69"/><rect x="5" y="6" width="7" height="1" fill="#2e7d47"/><rect x="5" y="7" width="3" height="1" fill="#2e7d47"/><g fill="#fff"><rect x="3" y="3" width="6" height="1"/><rect x="8" y="4" width="2" height="1"/><rect x="3" y="3" width="2" height="6.500"/><rect x="4" y="9" width="4.500" height="1"/><rect x="8" y="8" width="2" height="1"/></g></g></svg>
<div class="row" style="left:281px;top:818px"><span class="lb">o</span></div>
<svg class="abs" style="left:211px;top:859px;width:15px;height:18px" viewBox="0 0 15 18"><path d="M0 0V18L15 9z" fill="#8c8c8c"/></svg>
<svg class="ico" style="left:244px;top:852px" viewBox="0 0 16 16"><circle cx="6.500" cy="6.500" r="6.500" fill="#3b8b55"/><circle cx="6.500" cy="6.500" r="5.400" fill="#5fa676"/><g shape-rendering="crispEdges"><rect x="3" y="2" width="6" height="1" fill="#8cc09b"/><rect x="2" y="3" width="1" height="6" fill="#9ccaa8"/><rect x="5" y="4" width="3" height="5" fill="#a9d1b4"/><rect x="8" y="7" width="2" height="1" fill="#c4dfcb"/><rect x="5" y="5" width="7" height="1" fill="#4f9d69"/><rect x="5" y="6" width="7" height="1" fill="#2e7d47"/><rect x="5" y="7" width="3" height="1" fill="#2e7d47"/><g fill="#fff"><rect x="3" y="3" width="6" height="1"/><rect x="8" y="4" width="2" height="1"/><rect x="3" y="3" width="2" height="6.500"/><rect x="4" y="9" width="4.500" height="1"/><rect x="8" y="8" width="2" height="1"/></g></g></svg>
<div class="row" style="left:281px;top:852px"><span class="lb">p</span></div>
<svg class="abs" style="left:211px;top:893px;width:15px;height:18px" viewBox="0 0 15 18"><path d="M0 0V18L15 9z" fill="#8c8c8c"/></svg>
<svg class="ico" style="left:244px;top:886px" viewBox="0 0 16 16"><circle cx="6.500" cy="6.500" r="6.500" fill="#3b8b55"/><circle cx="6.500" cy="6.500" r="5.400" fill="#5fa676"/><g shape-rendering="crispEdges"><rect x="3" y="2" width="6" height="1" fill="#8cc09b"/><rect x="2" y="3" width="1" height="6" fill="#9ccaa8"/><rect x="5" y="4" width="3" height="5" fill="#a9d1b4"/><rect x="8" y="7" width="2" height="1" fill="#c4dfcb"/><rect x="5" y="5" width="7" height="1" fill="#4f9d69"/><rect x="5" y="6" width="7" height="1" fill="#2e7d47"/><rect x="5" y="7" width="3" height="1" fill="#2e7d47"/><g fill="#fff"><rect x="3" y="3" width="6" height="1"/><rect x="8" y="4" width="2" height="1"/><rect x="3" y="3" width="2" height="6.500"/><rect x="4" y="9" width="4.500" height="1"/><rect x="8" y="8" width="2" height="1"/></g></g></svg>
<div class="row" style="left:281px;top:886px"><span class="lb sel">q</span></div>
<svg class="abs" style="left:171px;top:927px;width:15px;height:18px" viewBox="0 0 15 18"><path d="M0 0V18L15 9z" fill="#8c8c8c"/></svg>
<svg class="ico" style="left:204px;top:922px" viewBox="0 0 16 16" shape-rendering="crispEdges"><rect x="2" y="2" width="11" height="11" fill="#c47a1a"/><rect x="12" y="3" width="1" height="10" fill="#b4640f"/><rect x="2" y="12" width="11" height="1" fill="#b05e0c"/><rect x="3" y="3" width="9" height="9" fill="#f1d9ab"/><path d="M3 7.500h9M7.500 3v9" stroke="#9c6a55" fill="none"/><path d="M2 7.500h1M12 7.500h1M7.500 2v1M7.500 12v1" stroke="#a0621e"/><path d="M1 7.500h1M13 7.500h1M7.500 1v1M7.500 13v1" stroke="#6b2c00"/><path d="M6 7.500h3M7.500 6v3" stroke="#7a4438"/><g fill="#fffbb0"><rect x="4" y="4" width="1" height="1"/><rect x="9" y="4" width="1" height="1"/><rect x="4" y="9" width="1" height="1"/><rect x="9" y="9" width="1" height="1"/></g></svg>
<div class="row" style="left:241px;top:920px"><span class="lb">m</span></div>
<svg class="abs" style="left:171px;top:961px;width:15px;height:18px" viewBox="0 0 15 18"><path d="M0 0V18L15 9z" fill="#8c8c8c"/></svg>
<svg class="ico" style="left:204px;top:956px" viewBox="0 0 16 16" shape-rendering="crispEdges"><rect x="2" y="2" width="11" height="11" fill="#c47a1a"/><rect x="12" y="3" width="1" height="10" fill="#b4640f"/><rect x="2" y="12" width="11" height="1" fill="#b05e0c"/><rect x="3" y="3" width="9" height="9" fill="#f1d9ab"/><path d="M3 7.500h9M7.500 3v9" stroke="#9c6a55" fill="none"/><path d="M2 7.500h1M12 7.500h1M7.500 2v1M7.500 12v1" stroke="#a0621e"/><path d="M1 7.500h1M13 7.500h1M7.500 1v1M7.500 13v1" stroke="#6b2c00"/><path d="M6 7.500h3M7.500 6v3" stroke="#7a4438"/><g fill="#fffbb0"><rect x="4" y="4" width="1" height="1"/><rect x="9" y="4" width="1" height="1"/><rect x="4" y="9" width="1" height="1"/><rect x="9" y="9" width="1" height="1"/></g></svg>
<div class="row" style="left:241px;top:954px"><span class="lb">n</span></div>
<svg class="abs" style="left:171px;top:995px;width:15px;height:18px" viewBox="0 0 15 18"><path d="M0 0V18L15 9z" fill="#8c8c8c"/></svg>
<svg class="ico" style="left:204px;top:990px" viewBox="0 0 16 16" shape-rendering="crispEdges"><rect x="2" y="2" width="11" height="11" fill="#c47a1a"/><rect x="12" y="3" width="1" height="10" fill="#b4640f"/><rect x="2" y="12" width="11" height="1" fill="#b05e0c"/><rect x="3" y="3" width="9" height="9" fill="#f1d9ab"/><path d="M3 7.500h9M7.500 3v9" stroke="#9c6a55" fill="none"/><path d="M2 7.500h1M12 7.500h1M7.500 2v1M7.500 12v1" stroke="#a0621e"/><path d="M1 7.500h1M13 7.500h1M7.500 1v1M7.500 13v1" stroke="#6b2c00"/><path d="M6 7.500h3M7.500 6v3" stroke="#7a4438"/><g fill="#fffbb0"><rect x="4" y="4" width="1" height="1"/><rect x="9" y="4" width="1" height="1"/><rect x="4" y="9" width="1" height="1"/><rect x="9" y="9" width="1" height="1"/></g></svg>
<div class="row" style="left:241px;top:988px"><span class="lb">o</span></div>
<svg class="abs" style="left:171px;top:1029px;width:15px;height:18px" viewBox="0 0 15 18"><path d="M0 0V18L15 9z" fill="#8c8c8c"/></svg>
<svg class="ico" style="left:204px;top:1024px" viewBox="0 0 16 16" shape-rendering="crispEdges"><rect x="2" y="2" width="11" height="11" fill="#c47a1a"/><rect x="12" y="3" width="1" height="10" fill="#b4640f"/><rect x="2" y="12" width="11" height="1" fill="#b05e0c"/><rect x="3" y="3" width="9" height="9" fill="#f1d9ab"/><path d="M3 7.500h9M7.500 3v9" stroke="#9c6a55" fill="none"/><path d="M2 7.500h1M12 7.500h1M7.500 2v1M7.500 12v1" stroke="#a0621e"/><path d="M1 7.500h1M13 7.500h1M7.500 1v1M7.500 13v1" stroke="#6b2c00"/><path d="M6 7.500h3M7.500 6v3" stroke="#7a4438"/><g fill="#fffbb0"><rect x="4" y="4" width="1" height="1"/><rect x="9" y="4" width="1" height="1"/><rect x="4" y="9" width="1" height="1"/><rect x="9" y="9" width="1" height="1"/></g></svg>
<div class="row" style="left:241px;top:1022px"><span class="lb">p</span></div>
<div class="vtrack" style="left:800px;top:2px;width:30px;height:1046px"></div>
<div class="thumb" style="left:808px;top:98px;width:16px;height:573px"></div>
</div>
<div class="abs" style="left:840px;top:676px;width:18px;height:20px;background:#fbfbfb;border:1px solid #dedede;border-left:none"><div class="abs" style="left:3px;top:3px;width:12px;height:12px;border-radius:50%;background:radial-gradient(#dadada,#c4c4c4)"></div></div>
<div class="abs" style="left:874px;top:190px;width:1120px;height:1002px;background:#e4e4e4;border-radius:9px;border:1px solid #dcdcdc"></div>
<div class="abs" style="left:880px;top:224px;width:1110px;height:964px;background:#eeeeee"></div>
<div class="abs" style="left:896px;top:238px;width:1078px;height:910px;background:#e4e4e4;border-radius:9px;border:1px solid #dcdcdc"></div>
<div class="abs" style="left:1289px;top:166px;width:290px;height:40px;border-radius:6px;background:linear-gradient(#6ea9fc,#5899fb 30%,#4088fb 50%,#1e72ff 72%,#0a64ff 90%,#035cff)">
<svg class="ico" style="left:24.5px;top:7.5px" viewBox="0 0 16 16"><circle cx="6.500" cy="6.500" r="6.500" fill="#3b8b55"/><circle cx="6.500" cy="6.500" r="5.400" fill="#5fa676"/><g shape-rendering="crispEdges"><rect x="3" y="2" width="6" height="1" fill="#8cc09b"/><rect x="2" y="3" width="1" height="6" fill="#9ccaa8"/><rect x="5" y="4" width="3" height="5" fill="#a9d1b4"/><rect x="8" y="7" width="2" height="1" fill="#c4dfcb"/><rect x="5" y="5" width="7" height="1" fill="#4f9d69"/><rect x="5" y="6" width="7" height="1" fill="#2e7d47"/><rect x="5" y="7" width="3" height="1" fill="#2e7d47"/><g fill="#fff"><rect x="3" y="3" width="6" height="1"/><rect x="8" y="4" width="2" height="1"/><rect x="3" y="3" width="2" height="6.500"/><rect x="4" y="9" width="4.500" height="1"/><rect x="8" y="8" width="2" height="1"/></g></g></svg>
<span class="abs ui" style="left:62.500px;top:10px;line-height:30px;letter-spacing:-0.680px;color:#000">h.a.a.a.a.l.q</span>
<svg class="abs" style="left:236px;top:11px;width:26px;height:26px" viewBox="0 0 26 26"><path d="M2.800 2.800L23.200 23.200M23.200 2.800L2.800 23.200" stroke="#e0727c" stroke-width="5.600"/><rect x="10" y="10" width="6" height="6" fill="#e98e94"/></svg>
</div>
<div id="code">
<div class="abs" style="left:64px;top:2px;width:2px;height:834px;background:#008000"></div>
<div class="abs" style="left:66px;top:0;width:966px;height:836px;overflow:hidden">
<div class="ln" style="top:2.70px">    <span class="p">}</span></div>
<div class="ln" style="top:32.70px"></div>
<div class="ln" style="top:62.70px">    <span class="k">public</span> u f<span class="p">(</span><span class="t">long</span> j2<span class="p">)</span> <span class="p">{</span></div>
<div class="ln" style="top:92.70px">        <span class="k">synchronized</span> <span class="p">(</span><span class="k">this</span>.f2664e<span class="p">)</span> <span class="p">{</span></div>
<div class="ln" style="top:122.70px">            b bVar <span class="o">=</span> <span class="k">this</span>.a;</div>
<div class="ln" style="top:152.70px">            <span class="f">String</span> str <span class="o">=</span> <span class="s">"h.a.a.a.a.l.q"</span>;</div>
<div class="ln" style="top:182.70px">            <span class="f">String</span> str2 <span class="o">=</span> <span class="s">"waitForResponse"</span>;</div>
<div class="ln" style="top:212.70px">            <span class="f">String</span> str3 <span class="o">=</span> <span class="s">"400"</span>;</div>
<div class="ln" style="top:242.70px">            <span class="f">Object</span><span class="p">[</span><span class="p">]</span> objArr <span class="o">=</span> <span class="k">new</span> <span class="f">Object</span><span class="p">[</span><span class="n">7</span><span class="p">]</span>;</div>
<div class="ln" style="top:272.70px">            objArr<span class="p">[</span><span class="n">0</span><span class="p">]</span> <span class="o">=</span> <span class="k">this</span>.j;</div>
<div class="ln" style="top:302.70px">            objArr<span class="p">[</span><span class="n">1</span><span class="p">]</span> <span class="o">=</span> <span class="f">Long</span>.valueOf<span class="p">(</span>j2<span class="p">)</span>;</div>
<div class="ln" style="top:332.70px">            objArr<span class="p">[</span><span class="n">2</span><span class="p">]</span> <span class="o">=</span> <span class="f">Boolean</span>.valueOf<span class="p">(</span><span class="k">this</span>.f2663d<span class="p">)</span>;</div>
<div class="ln" style="top:362.70px">            objArr<span class="p">[</span><span class="n">3</span><span class="p">]</span> <span class="o">=</span> <span class="f">Boolean</span>.valueOf<span class="p">(</span><span class="k">this</span>.b<span class="p">)</span>;</div>
<div class="ln" style="top:392.70px">            objArr<span class="p">[</span><span class="n">4</span><span class="p">]</span> <span class="o">=</span> <span class="k">this</span>.f2667h <span class="o">==</span> <span class="k">null</span> <span class="o">?</span> <span class="s">"false"</span> <span class="o">:</span> <span class="s">"true"</span>;</div>
<div class="ln" style="top:422.70px">            objArr<span class="p">[</span><span class="n">5</span><span class="p">]</span> <span class="o">=</span> <span class="k">this</span>.f2666g;</div>
<div class="ln" style="top:452.70px">            objArr<span class="p">[</span><span class="n">6</span><span class="p">]</span> <span class="o">=</span> <span class="k">this</span>;</div>
<div class="ln" style="top:482.70px">            bVar.e<span class="p">(</span>str, str2, str3, objArr, <span class="k">this</span>.f2667h<span class="p">)</span>;</div>
<div class="ln" style="top:512.70px">            <span class="k">while</span> <span class="p">(</span><span class="k">true</span><span class="p">)</span> <span class="p">{</span></div>
<div class="ln" style="top:542.70px">                <span class="k">if</span> <span class="p">(</span><span class="k">this</span>.b<span class="p">)</span> <span class="p">{</span></div>
<div class="ln" style="top:572.70px">                    <span class="k">break</span>;</div>
<div class="ln" style="top:602.70px">                <span class="p">}</span></div>
<div class="ln" style="top:632.70px">                <span class="k">if</span> <span class="p">(</span><span class="k">this</span>.f2667h <span class="o">==</span> <span class="k">null</span><span class="p">)</span> <span class="p">{</span></div>
<div class="ln" style="top:662.70px">                    <span class="k">try</span> <span class="p">{</span></div>
<div class="ln" style="top:692.70px">                        <span class="k">this</span>.a.k<span class="p">(</span><span class="s">"h.a.a.a.a.l.q"</span>, <span class="s">"waitForResponse"</span>,</div>
<div class="ln" style="top:722.70px">                        <span class="k">if</span> <span class="p">(</span>j2 <span class="o">&lt;=</span> <span class="n">0</span><span class="p">)</span> <span class="p">{</span></div>
<div class="ln" style="top:752.70px">                            <span class="k">this</span>.f2664e.wait<span class="p">(</span><span class="p">)</span>;</div>
<div class="ln" style="top:782.70px">                        <span class="p">}</span> <span class="k">else</span> <span class="p">{</span></div>
<div class="ln" style="top:812.70px">                            <span class="k">this</span>.f2664e.wait<span class="p">(</span>j2<span class="p">)</span>;</div>
</div>
<div class="abs" style="left:0;top:0;width:64px;height:836px;overflow:hidden">
<div class="no" style="left:11px;top:9.31px">117</div>
<div class="no" style="left:11px;top:39.31px">118</div>
<div class="no" style="left:11px;top:69.31px">119</div>
<div class="no" style="left:11px;top:99.31px">120</div>
<div class="no" style="left:11px;top:129.31px">121</div>
<div class="no" style="left:11px;top:159.31px">122</div>
<div class="no" style="left:11px;top:189.31px">123</div>
<div class="no" style="left:11px;top:219.31px">124</div>
<div class="no" style="left:11px;top:249.31px">125</div>
<div class="no" style="left:11px;top:279.32px">126</div>
<div class="no" style="left:11px;top:309.32px">127</div>
<div class="no" style="left:11px;top:339.32px">128</div>
<div class="no" style="left:11px;top:369.32px">129</div>
<div class="no" style="left:11px;top:399.32px">130</div>
<div class="no" style="left:11px;top:429.32px">131</div>
<div class="no" style="left:11px;top:459.32px">132</div>
<div class="no" style="left:11px;top:489.32px">133</div>
<div class="no" style="left:11px;top:519.32px">134</div>
<div class="no" style="left:11px;top:549.32px">135</div>
<div class="no" style="left:11px;top:579.32px">136</div>
<div class="no" style="left:11px;top:609.32px">137</div>
<div class="no" style="left:11px;top:639.32px">138</div>
<div class="no" style="left:11px;top:669.32px">139</div>
<div class="no" style="left:11px;top:699.32px">140</div>
<div class="no" style="left:11px;top:729.32px">141</div>
<div class="no" style="left:11px;top:759.31px">142</div>
<div class="no" style="left:11px;top:789.31px">143</div>
<div class="no" style="left:11px;top:819.31px">144</div>
</div>
<div class="vtrack" style="left:1032px;top:2px;width:30px;height:834px"></div>
<div class="thumb" style="left:1040px;top:388px;width:16px;height:88px"></div>
<div class="abs" style="left:66px;top:836px;width:966px;height:28px;background:linear-gradient(#f7f7f7,#fbfbfb 40%,#fafafa);border-top:2px solid #e8e8e8"></div>
<div class="thumb" style="left:68px;top:844px;width:352px;height:16px"></div>
</div>
<div class="abs" style="left:902px;top:1120px;width:1068px;height:2px;background:#fafafa"></div>
<div class="abs ui" style="left:1327px;top:1138px;width:105px;height:40px;border-radius:7px 0 0 7px;background:linear-gradient(#6ea9fc,#5899fb 30%,#4088fb 50%,#1e72ff 72%,#0a64ff 90%,#035cff);color:#fff;line-height:38px;text-align:center;text-shadow:0 1px 1px rgba(0,0,60,0.35);letter-spacing:-0.300px;padding-right:2px">Code</div>
<div class="abs ui" style="left:1432px;top:1138px;width:109px;height:40px;border-radius:0 7px 7px 0;background:#fff;border:1px solid #c6c6c6;border-left:none;box-shadow:0 1px 1px rgba(0,0,0,0.12);color:#000;line-height:36px;text-align:center;letter-spacing:-0.700px;padding-left:6px">Smali</div>
<div class="abs" style="left:0;top:1214px;width:2010px;height:2px;background:#8a8a8a"></div>
<div class="abs" style="left:0;top:1216px;width:2010px;height:40px;background:#eeeeee"></div>
<div class="abs" style="left:2px;top:1231px;width:2016px;height:12px;border-radius:6px;background:#dcdcdc;box-shadow:inset 0 0 0 1px #c4c4c4;overflow:hidden"><div class="abs" style="left:0;top:0;width:51px;height:12px;background:#3b86fb;box-shadow:inset 0 0 0 1px #3279ea"></div></div>
<div class="abs ui" style="left:1px;top:1220px;width:2010px;text-align:center;line-height:34px;color:#000;letter-spacing:-0.900px"><span style="letter-spacing:0px">JADX </span><span style="letter-spacing:-0.200px">内存使用率：</span>0.11 GB 共 4.00 GB</div>
</div>
</body></html>
